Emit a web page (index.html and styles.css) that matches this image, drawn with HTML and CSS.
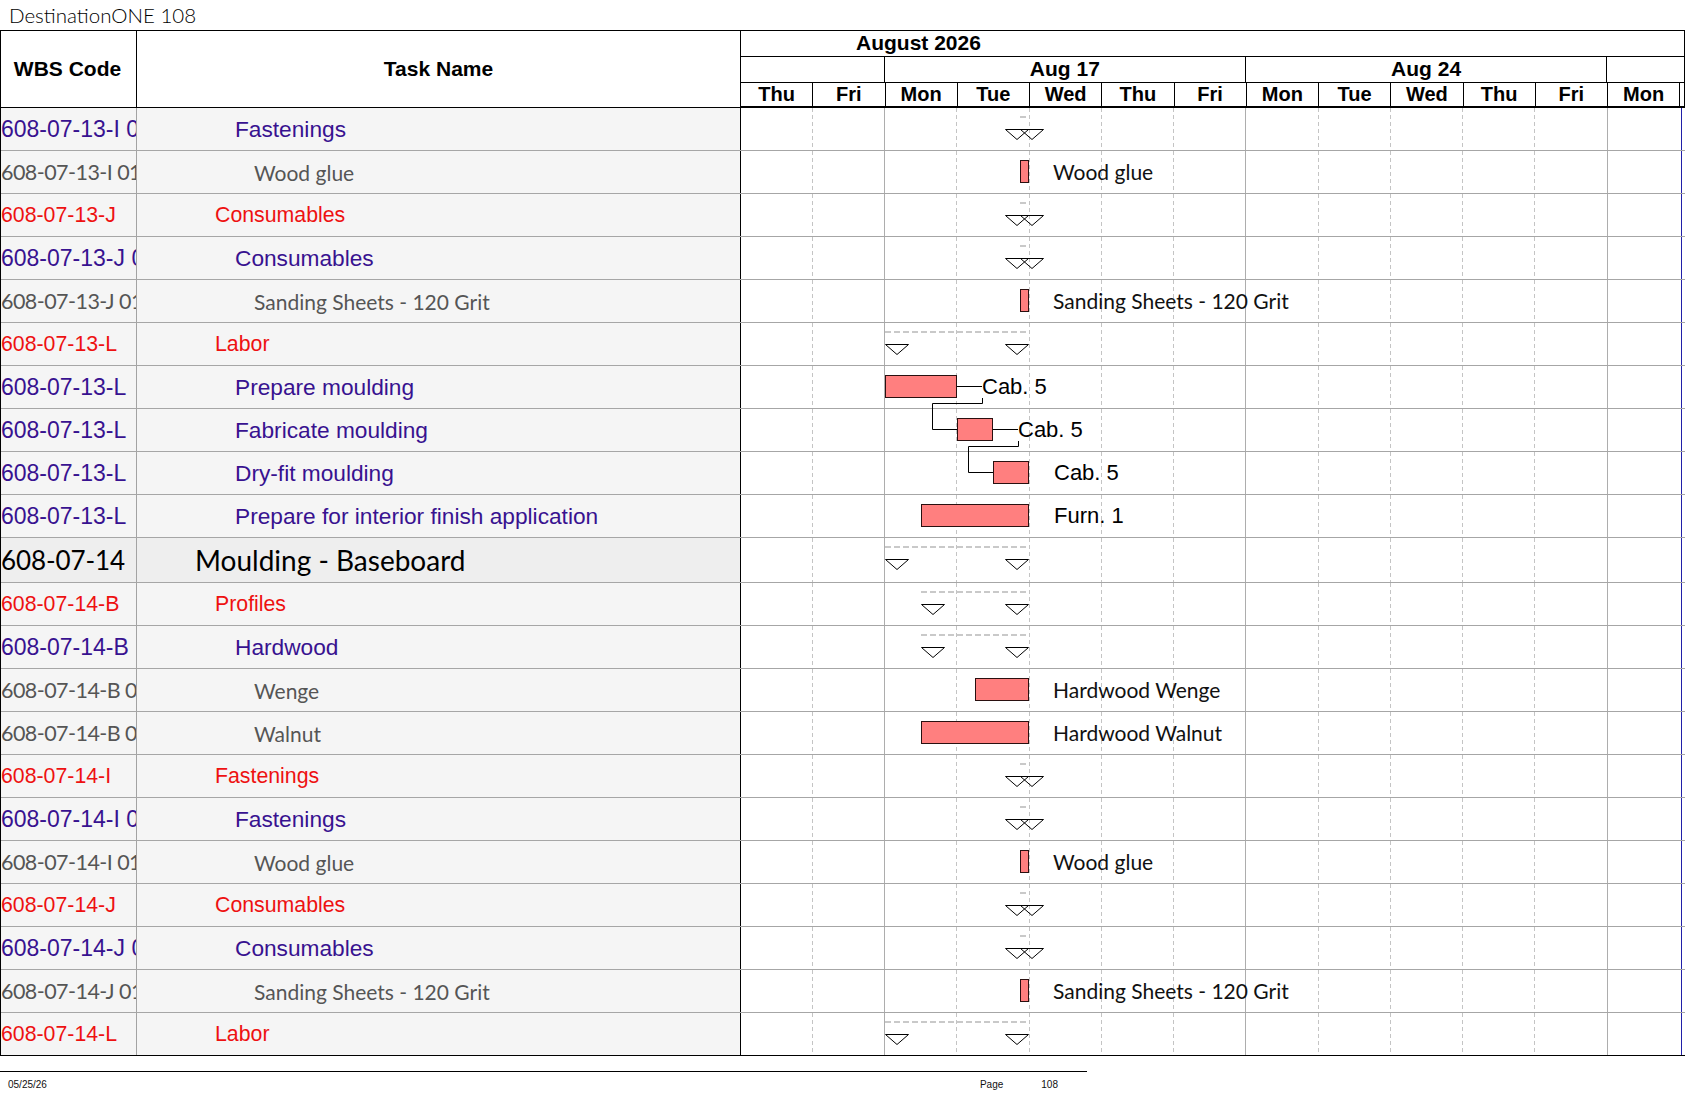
FILE: index.html
```html
<!DOCTYPE html>
<html>
<head>
<meta charset="utf-8">
<title>DestinationONE 108</title>
<link rel="stylesheet" href="styles.css">
</head>
<body>
<div class="title">DestinationONE 108</div>
<div class="sheet">
  <div class="head">
    <div class="h-wbs">WBS Code</div>
    <div class="h-task">Task Name</div>
    <div class="h-chart">
      <div class="h-month">August 2026</div>
      <div class="h-weeks">
        <div class="wk wk-a"></div>
        <div class="wk wk-b">Aug 17</div>
        <div class="wk wk-b">Aug 24</div>
        <div class="wk wk-c"></div>
      </div>
      <div class="h-days">
        <div class="day">Thu</div><div class="day">Fri</div>
        <div class="day">Mon</div><div class="day">Tue</div><div class="day">Wed</div><div class="day">Thu</div><div class="day">Fri</div>
        <div class="day">Mon</div><div class="day">Tue</div><div class="day">Wed</div><div class="day">Thu</div><div class="day">Fri</div>
        <div class="day">Mon</div>
      </div>
    </div>
  </div>

  <div class="rows">
    <!-- 1 -->
    <div class="row lv3">
      <div class="c-wbs">608-07-13-I 01</div>
      <div class="c-task">Fastenings</div>
      <div class="c-chart">
        <div class="sline" style="left:279.2px;width:9px"></div>
        <svg class="tri" style="left:264.25px" width="24" height="11" viewBox="0 0 24 11"><path d="M0.5 0.5H23.5L12 10.5Z"/></svg>
        <svg class="tri" style="left:279.2px" width="24" height="11" viewBox="0 0 24 11"><path d="M0.5 0.5H23.5L12 10.5Z"/></svg>
      </div>
    </div>
    <!-- 2 -->
    <div class="row lv4">
      <div class="c-wbs">608-07-13-I 01 01</div>
      <div class="c-task">Wood glue</div>
      <div class="c-chart">
        <div class="bar" style="left:279.2px;width:9.05px"></div>
        <div class="lbl lbl-c" style="left:312px">Wood glue</div>
      </div>
    </div>
    <!-- 3 -->
    <div class="row lv2">
      <div class="c-wbs">608-07-13-J</div>
      <div class="c-task">Consumables</div>
      <div class="c-chart">
        <div class="sline" style="left:279.2px;width:9px"></div>
        <svg class="tri" style="left:264.25px" width="24" height="11" viewBox="0 0 24 11"><path d="M0.5 0.5H23.5L12 10.5Z"/></svg>
        <svg class="tri" style="left:279.2px" width="24" height="11" viewBox="0 0 24 11"><path d="M0.5 0.5H23.5L12 10.5Z"/></svg>
      </div>
    </div>
    <!-- 4 -->
    <div class="row lv3">
      <div class="c-wbs">608-07-13-J 01</div>
      <div class="c-task">Consumables</div>
      <div class="c-chart">
        <div class="sline" style="left:279.2px;width:9px"></div>
        <svg class="tri" style="left:264.25px" width="24" height="11" viewBox="0 0 24 11"><path d="M0.5 0.5H23.5L12 10.5Z"/></svg>
        <svg class="tri" style="left:279.2px" width="24" height="11" viewBox="0 0 24 11"><path d="M0.5 0.5H23.5L12 10.5Z"/></svg>
      </div>
    </div>
    <!-- 5 -->
    <div class="row lv4">
      <div class="c-wbs">608-07-13-J 01 01</div>
      <div class="c-task">Sanding Sheets - 120 Grit</div>
      <div class="c-chart">
        <div class="bar" style="left:279.2px;width:9.05px"></div>
        <div class="lbl lbl-c" style="left:312px">Sanding Sheets - 120 Grit</div>
      </div>
    </div>
    <!-- 6 -->
    <div class="row lv2">
      <div class="c-wbs">608-07-13-L</div>
      <div class="c-task">Labor</div>
      <div class="c-chart">
        <div class="sline" style="left:143.75px;width:144.5px"></div>
        <svg class="tri" style="left:143.75px" width="24" height="11" viewBox="0 0 24 11"><path d="M0.5 0.5H23.5L12 10.5Z"/></svg>
        <svg class="tri" style="left:264.25px" width="24" height="11" viewBox="0 0 24 11"><path d="M0.5 0.5H23.5L12 10.5Z"/></svg>
      </div>
    </div>
    <!-- 7 -->
    <div class="row lv3">
      <div class="c-wbs">608-07-13-L</div>
      <div class="c-task">Prepare moulding</div>
      <div class="c-chart">
        <div class="bar" style="left:143.75px;width:72.25px"></div>
        <div class="lbl lbl-a" style="left:241px">Cab. 5</div>
        <svg class="links" width="400" height="120" viewBox="0 0 400 120">
          <path d="M216 20.5H241"/>
          <path d="M241.5 32V37.5H191.5V63.5H216"/>
          <path d="M252 63.5H277"/>
          <path d="M277.5 75V80.5H227.5V106.5H252"/>
        </svg>
      </div>
    </div>
    <!-- 8 -->
    <div class="row lv3">
      <div class="c-wbs">608-07-13-L</div>
      <div class="c-task">Fabricate moulding</div>
      <div class="c-chart">
        <div class="bar" style="left:216px;width:36.1px"></div>
        <div class="lbl lbl-a" style="left:277px">Cab. 5</div>
      </div>
    </div>
    <!-- 9 -->
    <div class="row lv3">
      <div class="c-wbs">608-07-13-L</div>
      <div class="c-task">Dry-fit moulding</div>
      <div class="c-chart">
        <div class="bar" style="left:252.1px;width:36.15px"></div>
        <div class="lbl lbl-a" style="left:313px">Cab. 5</div>
      </div>
    </div>
    <!-- 10 -->
    <div class="row lv3">
      <div class="c-wbs">608-07-13-L</div>
      <div class="c-task">Prepare for interior finish application</div>
      <div class="c-chart">
        <div class="bar" style="left:179.9px;width:108.35px"></div>
        <div class="lbl lbl-a" style="left:313px">Furn. 1</div>
      </div>
    </div>
    <!-- 11 -->
    <div class="row lv1 big">
      <div class="c-wbs">608-07-14</div>
      <div class="c-task">Moulding - Baseboard</div>
      <div class="c-chart">
        <div class="sline" style="left:143.75px;width:144.5px"></div>
        <svg class="tri" style="left:143.75px" width="24" height="11" viewBox="0 0 24 11"><path d="M0.5 0.5H23.5L12 10.5Z"/></svg>
        <svg class="tri" style="left:264.25px" width="24" height="11" viewBox="0 0 24 11"><path d="M0.5 0.5H23.5L12 10.5Z"/></svg>
      </div>
    </div>
    <!-- 12 -->
    <div class="row lv2">
      <div class="c-wbs">608-07-14-B</div>
      <div class="c-task">Profiles</div>
      <div class="c-chart">
        <div class="sline" style="left:179.9px;width:108.35px"></div>
        <svg class="tri" style="left:179.9px" width="24" height="11" viewBox="0 0 24 11"><path d="M0.5 0.5H23.5L12 10.5Z"/></svg>
        <svg class="tri" style="left:264.25px" width="24" height="11" viewBox="0 0 24 11"><path d="M0.5 0.5H23.5L12 10.5Z"/></svg>
      </div>
    </div>
    <!-- 13 -->
    <div class="row lv3">
      <div class="c-wbs">608-07-14-B</div>
      <div class="c-task">Hardwood</div>
      <div class="c-chart">
        <div class="sline" style="left:179.9px;width:108.35px"></div>
        <svg class="tri" style="left:179.9px" width="24" height="11" viewBox="0 0 24 11"><path d="M0.5 0.5H23.5L12 10.5Z"/></svg>
        <svg class="tri" style="left:264.25px" width="24" height="11" viewBox="0 0 24 11"><path d="M0.5 0.5H23.5L12 10.5Z"/></svg>
      </div>
    </div>
    <!-- 14 -->
    <div class="row lv4">
      <div class="c-wbs">608-07-14-B 01</div>
      <div class="c-task">Wenge</div>
      <div class="c-chart">
        <div class="bar" style="left:234.05px;width:54.2px"></div>
        <div class="lbl lbl-c" style="left:312px">Hardwood Wenge</div>
      </div>
    </div>
    <!-- 15 -->
    <div class="row lv4">
      <div class="c-wbs">608-07-14-B 02</div>
      <div class="c-task">Walnut</div>
      <div class="c-chart">
        <div class="bar" style="left:179.9px;width:108.35px"></div>
        <div class="lbl lbl-c" style="left:312px">Hardwood Walnut</div>
      </div>
    </div>
    <!-- 16 -->
    <div class="row lv2">
      <div class="c-wbs">608-07-14-I</div>
      <div class="c-task">Fastenings</div>
      <div class="c-chart">
        <div class="sline" style="left:279.2px;width:9px"></div>
        <svg class="tri" style="left:264.25px" width="24" height="11" viewBox="0 0 24 11"><path d="M0.5 0.5H23.5L12 10.5Z"/></svg>
        <svg class="tri" style="left:279.2px" width="24" height="11" viewBox="0 0 24 11"><path d="M0.5 0.5H23.5L12 10.5Z"/></svg>
      </div>
    </div>
    <!-- 17 -->
    <div class="row lv3">
      <div class="c-wbs">608-07-14-I 01</div>
      <div class="c-task">Fastenings</div>
      <div class="c-chart">
        <div class="sline" style="left:279.2px;width:9px"></div>
        <svg class="tri" style="left:264.25px" width="24" height="11" viewBox="0 0 24 11"><path d="M0.5 0.5H23.5L12 10.5Z"/></svg>
        <svg class="tri" style="left:279.2px" width="24" height="11" viewBox="0 0 24 11"><path d="M0.5 0.5H23.5L12 10.5Z"/></svg>
      </div>
    </div>
    <!-- 18 -->
    <div class="row lv4">
      <div class="c-wbs">608-07-14-I 01 01</div>
      <div class="c-task">Wood glue</div>
      <div class="c-chart">
        <div class="bar" style="left:279.2px;width:9.05px"></div>
        <div class="lbl lbl-c" style="left:312px">Wood glue</div>
      </div>
    </div>
    <!-- 19 -->
    <div class="row lv2">
      <div class="c-wbs">608-07-14-J</div>
      <div class="c-task">Consumables</div>
      <div class="c-chart">
        <div class="sline" style="left:279.2px;width:9px"></div>
        <svg class="tri" style="left:264.25px" width="24" height="11" viewBox="0 0 24 11"><path d="M0.5 0.5H23.5L12 10.5Z"/></svg>
        <svg class="tri" style="left:279.2px" width="24" height="11" viewBox="0 0 24 11"><path d="M0.5 0.5H23.5L12 10.5Z"/></svg>
      </div>
    </div>
    <!-- 20 -->
    <div class="row lv3">
      <div class="c-wbs">608-07-14-J 01</div>
      <div class="c-task">Consumables</div>
      <div class="c-chart">
        <div class="sline" style="left:279.2px;width:9px"></div>
        <svg class="tri" style="left:264.25px" width="24" height="11" viewBox="0 0 24 11"><path d="M0.5 0.5H23.5L12 10.5Z"/></svg>
        <svg class="tri" style="left:279.2px" width="24" height="11" viewBox="0 0 24 11"><path d="M0.5 0.5H23.5L12 10.5Z"/></svg>
      </div>
    </div>
    <!-- 21 -->
    <div class="row lv4">
      <div class="c-wbs">608-07-14-J 01 01</div>
      <div class="c-task">Sanding Sheets - 120 Grit</div>
      <div class="c-chart">
        <div class="bar" style="left:279.2px;width:9.05px"></div>
        <div class="lbl lbl-c" style="left:312px">Sanding Sheets - 120 Grit</div>
      </div>
    </div>
    <!-- 22 -->
    <div class="row lv2 last">
      <div class="c-wbs">608-07-14-L</div>
      <div class="c-task">Labor</div>
      <div class="c-chart">
        <div class="sline" style="left:143.75px;width:144.5px"></div>
        <svg class="tri" style="left:143.75px" width="24" height="11" viewBox="0 0 24 11"><path d="M0.5 0.5H23.5L12 10.5Z"/></svg>
        <svg class="tri" style="left:264.25px" width="24" height="11" viewBox="0 0 24 11"><path d="M0.5 0.5H23.5L12 10.5Z"/></svg>
      </div>
    </div>
  </div>
</div>

<div class="footer">
  <span class="f-date">05/25/26</span>
  <span class="f-page">Page</span>
  <span class="f-num">108</span>
</div>
</body>
</html>
```

FILE: styles.css
```css
html, body {
  margin: 0;
  padding: 0;
  background: #ffffff;
}

body {
  width: 1687px;
  height: 1097px;
  overflow: hidden;
  font-family: "Liberation Sans", Arial, sans-serif;
  color: #000;
}

.title {
  height: 30px;
  padding-left: 9px;
  font-family: Lato, "Open Sans", sans-serif;
  font-weight: 300;
  font-size: 20.5px;
  line-height: 30px;
  color: #000;
  box-sizing: border-box;
}

.sheet {
  width: max-content;
  border-top: 1px solid #000;
  border-left: 1px solid #000;
}

/* ---------- header ---------- */
.head {
  display: flex;
  height: 77px;
}

.h-wbs,
.h-task {
  box-sizing: border-box;
  height: 77px;
  border-right: 1px solid #000;
  border-bottom: 1px solid #000;
  display: flex;
  align-items: center;
  justify-content: center;
  font-weight: 700;
  font-size: 21px;
}

.h-wbs { width: 136px; padding-right: 2px; }
.h-task { width: 604px; }

.h-chart {
  width: 944px;
  box-sizing: border-box;
  border-right: 1px solid #000;
  display: flex;
  flex-direction: column;
}

.h-month {
  height: 26px;
  box-sizing: border-box;
  border-bottom: 1px solid #000;
  padding-left: 115px;
  font-weight: 700;
  font-size: 21px;
  line-height: 24px;
}

.h-weeks {
  height: 26px;
  box-sizing: border-box;
  border-bottom: 1px solid #000;
  display: flex;
}

.wk {
  box-sizing: border-box;
  border-right: 1px solid #000;
  font-weight: 700;
  font-size: 21px;
  line-height: 24px;
  text-align: center;
  flex: none;
}

.wk-a { width: 143.75px; }
.wk-b { width: 361.25px; }
.wk-c { flex: 1; border-right: none; }

.h-days {
  height: 25px;
  box-sizing: border-box;
  border-bottom: 2px solid #000;
  display: flex;
}

.day {
  flex: none;
  width: 72.25px;
  box-sizing: border-box;
  border-right: 1px solid #000;
  font-weight: 700;
  font-size: 20px;
  line-height: 23px;
  text-align: center;
}

/* ---------- rows ---------- */
.row {
  display: flex;
  height: 43px;
  box-sizing: border-box;
  border-bottom: 1px solid #a6a6a6;
}

.row.big { height: 45px; }
.row.last { border-bottom-color: #000; }

.c-wbs {
  flex: none;
  width: 136px;
  box-sizing: border-box;
  border-right: 1px solid #a3a3a3;
  background: #f5f5f5;
  overflow: hidden;
  white-space: nowrap;
  display: flex;
  align-items: center;
}

.c-task {
  flex: none;
  width: 604px;
  box-sizing: border-box;
  border-right: 1px solid #000;
  background: #f5f5f5;
  white-space: nowrap;
  overflow: hidden;
  display: flex;
  align-items: center;
}

.big .c-wbs,
.big .c-task { background: #eeeeee; }

.c-chart {
  flex: none;
  width: 941px;
  box-sizing: border-box;
  border-right: 1px solid #2020a8;
  position: relative;
  background-color: #fff;
  background-image:
    linear-gradient(#adadad, #adadad),
    linear-gradient(#adadad, #adadad),
    linear-gradient(#adadad, #adadad),
    linear-gradient(to bottom, #c4c4c4 0 4px, transparent 4px 7px),
    linear-gradient(to bottom, #c4c4c4 0 4px, transparent 4px 7px),
    linear-gradient(to bottom, #c4c4c4 0 4px, transparent 4px 7px),
    linear-gradient(to bottom, #c4c4c4 0 4px, transparent 4px 7px),
    linear-gradient(to bottom, #c4c4c4 0 4px, transparent 4px 7px),
    linear-gradient(to bottom, #c4c4c4 0 4px, transparent 4px 7px),
    linear-gradient(to bottom, #c4c4c4 0 4px, transparent 4px 7px),
    linear-gradient(to bottom, #c4c4c4 0 4px, transparent 4px 7px),
    linear-gradient(to bottom, #c4c4c4 0 4px, transparent 4px 7px);
  background-size:
    1px 100%, 1px 100%, 1px 100%,
    1px 7px, 1px 7px, 1px 7px, 1px 7px, 1px 7px, 1px 7px, 1px 7px, 1px 7px, 1px 7px;
  background-repeat:
    no-repeat, no-repeat, no-repeat,
    repeat-y, repeat-y, repeat-y, repeat-y, repeat-y, repeat-y, repeat-y, repeat-y, repeat-y;
  background-position:
    143px 0, 504px 0, 866px 0,
    71px 0, 215px 0, 288px 0, 360px 0, 432px 0, 577px 0, 649px 0, 721px 0, 793px 0;
}

/* level typography */
.lv1 .c-wbs,
.lv1 .c-task {
  font-family: Lato, "Open Sans", sans-serif;
  color: #000;
}
.lv1 .c-wbs { font-size: 26px; letter-spacing: -0.1px; }
.lv1 .c-task { font-size: 28px; padding-left: 58px; }

.lv2 .c-wbs,
.lv2 .c-task {
  font-family: "Liberation Sans", Arial, sans-serif;
  font-size: 21.3px;
  color: #ee1111;
}
.lv2 .c-task { padding-left: 78px; }

.lv3 .c-wbs,
.lv3 .c-task {
  font-family: "Liberation Sans", Arial, sans-serif;
  color: #381290;
}
.lv3 .c-wbs { font-size: 23px; }
.lv3 .c-task { font-size: 22.7px; padding-left: 98px; }

.lv4 .c-wbs,
.lv4 .c-task {
  font-family: Lato, "Open Sans", sans-serif;
  color: #555555;
}
.lv4 .c-wbs { font-size: 21.5px; letter-spacing: -0.55px; }
.lv4 .c-task { font-size: 21px; padding-left: 117px; }

/* ---------- gantt items ---------- */
.bar {
  position: absolute;
  top: 8.5px;
  height: 23px;
  box-sizing: border-box;
  background: #ff7f7f;
  border: 1px solid #2a1010;
}

.sline {
  position: absolute;
  top: 8px;
  height: 2px;
  background: repeating-linear-gradient(90deg, #c9c9c9 0 6px, transparent 6px 9px);
}

.tri {
  position: absolute;
  top: 21px;
  fill: none;
  stroke: #000;
  stroke-width: 1;
  overflow: visible;
}

.lbl {
  position: absolute;
  top: 0;
  height: 42px;
  line-height: 42px;
  white-space: nowrap;
  color: #000;
}

.lbl-a {
  font-family: "Liberation Sans", Arial, sans-serif;
  font-size: 22px;
}

.lbl-c {
  font-family: Lato, "Open Sans", sans-serif;
  font-size: 21px;
  color: #111;
}

.links {
  position: absolute;
  left: 0;
  top: 0;
  z-index: 2;
  overflow: visible;
  fill: none;
  stroke: #000;
  stroke-width: 1;
  pointer-events: none;
}

/* ---------- footer ---------- */
.footer {
  margin-top: 15px;
  width: 1087px;
  height: 26px;
  box-sizing: border-box;
  border-top: 1px solid #000;
  display: flex;
  align-items: center;
  font-family: "Liberation Sans", Arial, sans-serif;
  font-size: 10px;
  color: #111;
}

.f-date { margin-left: 8px; }
.f-page { margin-left: auto; }
.f-num { margin-left: 38px; margin-right: 29px; }
```
